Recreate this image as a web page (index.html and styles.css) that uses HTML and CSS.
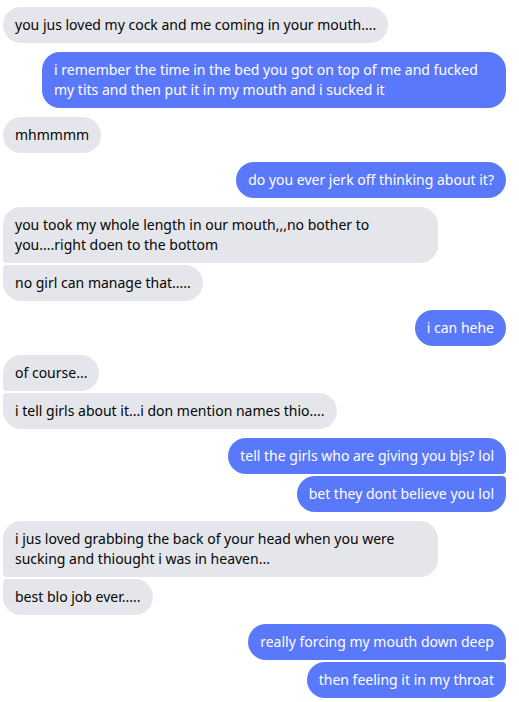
FILE: index.html
```html
<!DOCTYPE html>
<html lang="en">
<head>
    <meta charset="UTF-8">
    <meta name="viewport" content="width=device-width, initial-scale=1.0">
    <title>Chat</title>
    <link rel="stylesheet" href="styles.css">
</head>
<body>
    <div class="chat">
        <div class="group in">
            <div class="msg">you jus loved my cock and me coming in your mouth....</div>
        </div>
        <div class="group out">
            <div class="msg">i remember the time in the bed you got on top of me and fucked my tits and then put it in my mouth and i sucked it</div>
        </div>
        <div class="group in">
            <div class="msg">mhmmmm</div>
        </div>
        <div class="group out">
            <div class="msg">do you ever jerk off thinking about it?</div>
        </div>
        <div class="group in">
            <div class="msg">you took my whole length in our mouth,,,no bother to you....right doen to the bottom</div>
            <div class="msg">no girl can manage that.....</div>
        </div>
        <div class="group out">
            <div class="msg">i can hehe</div>
        </div>
        <div class="group in">
            <div class="msg">of course...</div>
            <div class="msg">i tell girls about it...i don mention names thio....</div>
        </div>
        <div class="group out">
            <div class="msg">tell the girls who are giving you bjs? lol</div>
            <div class="msg">bet they dont believe you lol</div>
        </div>
        <div class="group in">
            <div class="msg">i jus loved grabbing the back of your head when you were sucking and thiought i was in heaven...</div>
            <div class="msg">best blo job ever.....</div>
        </div>
        <div class="group out">
            <div class="msg">really forcing my mouth down deep</div>
            <div class="msg">then feeling it in my throat</div>
        </div>
    </div>
</body>
</html>
```

FILE: styles.css
```css
body {
    margin: 0;
    background-color: #ffffff;
    font-family: "Noto Sans", "Open Sans", sans-serif;
    font-size: 14px;
}

.chat {
    display: flex;
    flex-direction: column;
    gap: 9px;
    padding: 7px 13px 0 3px;
}

.group {
    display: flex;
    flex-direction: column;
    gap: 2px;
}

.msg {
    padding: 8px 12px;
    line-height: 20px;
    border-radius: 18px;
}

.in {
    align-items: flex-start;
}

.in .msg {
    background-color: #e4e6eb;
    color: #050505;
    max-width: 411px;
}

.out {
    align-items: flex-end;
}

.out .msg {
    background-color: #5a78fa;
    color: #ffffff;
    max-width: 440px;
}

/* grouped bubbles get the small corner on the inner side */
.in .msg:not(:last-child) {
    border-bottom-left-radius: 4px;
}

.in .msg:not(:first-child) {
    border-top-left-radius: 4px;
}

.out .msg:not(:last-child) {
    border-bottom-right-radius: 4px;
}

.out .msg:not(:first-child) {
    border-top-right-radius: 4px;
}
```
